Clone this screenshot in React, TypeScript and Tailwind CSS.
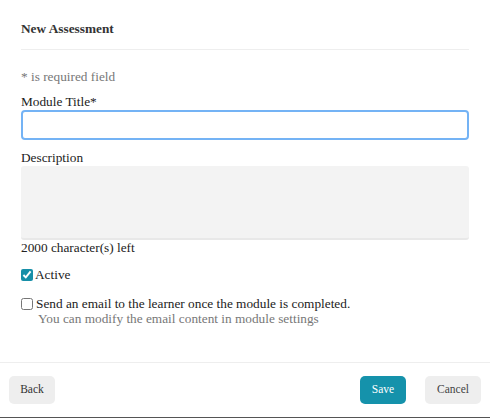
export default function App() {
  return (
    <div className="w-[490px] h-[418px] bg-white flex flex-col font-[family-name:Liberation_Serif,serif] text-[#333] border-b border-[#555]">
      {/* Header */}
      <div className="px-[21px]">
        <div className="h-[50px] flex items-center border-b border-[#eeeeee] pt-[8px]">
          <h2 className="text-[13.3px] leading-[16px] font-bold text-[#333]">New Assessment</h2>
        </div>
      </div>

      {/* Form */}
      <div className="px-[21px] flex-1 text-[13.3px] leading-[16px]">
        <p className="mt-[19px] text-[#777]">* is required field</p>
        <label className="block mt-[9px] text-[#222]">Module Title*</label>
        <input
          type="text"
          className="block w-full h-[30px] border-2 border-[#74b3f5] rounded-[4px] outline-none px-2"
        />
        <label className="block mt-[10px] text-[#222]">Description</label>
        <textarea className="block w-full h-[74px] bg-[#f3f3f3] border-b-2 border-[#e8e8e8] rounded-[3px] resize-none outline-none" />
        <p className="text-[#222]">2000 character(s) left</p>

        <label className="flex items-center mt-[11px] text-[#222]">
          <input type="checkbox" defaultChecked className="w-[12px] h-[12px] mr-[2px] accent-[#178fa8]" />
          Active
        </label>

        <label className="flex items-center mt-[13px] text-[#222]">
          <input type="checkbox" className="w-[12px] h-[12px] mr-[3px] accent-[#178fa8]" />
          Send an email to the learner once the module is completed.
        </label>
        <p className="pl-[17px] -mt-[1px] text-[#777]">You can modify the email content in module settings</p>
      </div>

      {/* Footer */}
      <div className="border-t border-[#eeeeee] h-[55px] flex items-start pt-[13px] px-[9px] text-[11.5px]">
        <button className="h-[28px] w-[46px] bg-[#eeeeee] rounded-[5px] text-[#333]">Back</button>
        <button className="ml-auto h-[28px] w-[46px] bg-[#1592ab] rounded-[5px] text-white">Save</button>
        <button className="ml-[19px] h-[28px] w-[56px] bg-[#eeeeee] rounded-[5px] text-[#444]">Cancel</button>
      </div>
    </div>
  );
}
